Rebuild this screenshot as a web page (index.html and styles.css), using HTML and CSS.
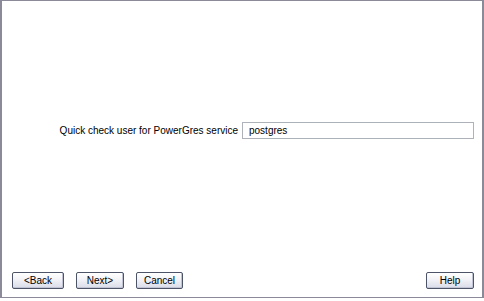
FILE: index.html
```html
<!DOCTYPE html>
<html>
<head>
<meta charset="utf-8">
<link rel="stylesheet" href="styles.css">
</head>
<body>
<div class="frame">
  <div class="content">
    <div class="row">
      <label class="label" for="user">Quick check user for PowerGres service</label>
      <input class="field" id="user" type="text" value="postgres">
    </div>
  </div>
  <div class="buttons">
    <div class="nav">
      <button class="btn w-back">&lt;Back</button>
      <button class="btn w-next">Next&gt;</button>
      <button class="btn w-cancel">Cancel</button>
    </div>
    <button class="btn w-help">Help</button>
  </div>
</div>
</body>
</html>
```
FILE: styles.css
```css
html, body {
  margin: 0;
  padding: 0;
  background: #ffffff;
  font-family: "Liberation Sans", Arial, sans-serif;
  font-size: 10px;
  color: #000;
}
.frame {
  width: 484px;
  height: 298px;
  box-sizing: border-box;
  border-left: 2px solid #8a8a98;
  border-right: 2px solid #8a8a98;
  border-top: 1px solid #8a8a98;
  border-bottom: 1px solid #8a8a98;
  display: flex;
  flex-direction: column;
}
.content {
  flex: 1;
  padding-top: 121px;
}
.row {
  display: flex;
  justify-content: flex-end;
  align-items: center;
  gap: 4px;
  padding-right: 8px;
}
.label {
  font-size: 10px;
}
.field {
  width: 232px;
  height: 17px;
  box-sizing: border-box;
  border: 1px solid #aeb3b9;
  padding: 0 0 0 6px;
  margin: 0;
  font-family: "Liberation Sans", Arial, sans-serif;
  font-size: 10px;
  color: #000;
  outline: none;
}
.buttons {
  display: flex;
  justify-content: space-between;
  padding: 0 8px 8px 10px;
}
.nav {
  display: flex;
  gap: 12px;
}
.btn {
  height: 17px;
  box-sizing: border-box;
  border: 1px solid #4e5468;
  border-radius: 2px;
  background: linear-gradient(#ffffff 0%, #f4f4f8 40%, #d9dce8 100%);
  box-shadow: inset -1px -1px 0 #c0c4d4;
  font-family: "Liberation Sans", Arial, sans-serif;
  font-size: 10px;
  color: #000;
  padding: 0;
  margin: 0;
}
.w-back { width: 52px; }
.w-next { width: 48px; }
.w-cancel { width: 47px; }
.w-help { width: 48px; }
```
